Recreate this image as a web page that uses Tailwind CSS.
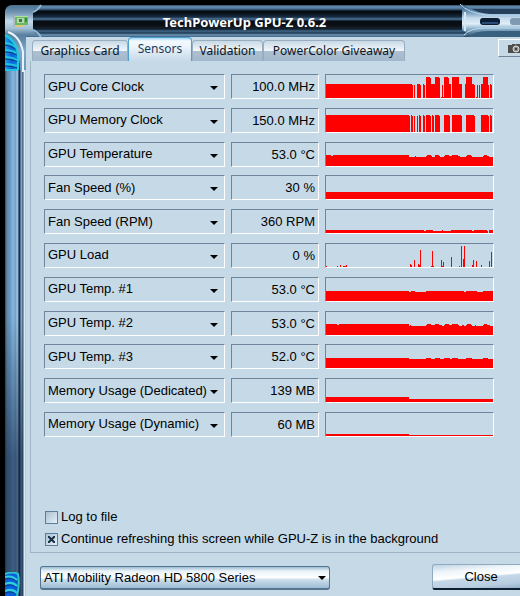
<!DOCTYPE html>
<html lang="en">

<head>
    <meta charset="UTF-8">
    <meta name="viewport" content="width=device-width, initial-scale=1.0">
    <title>TechPowerUp GPU-Z 0.6.2</title>
    <script src="https://cdn.jsdelivr.net/npm/@tailwindcss/browser@4"></script>
</head>

<body class="bg-black overflow-x-hidden font-['Liberation_Sans',Arial,sans-serif] text-[13px] leading-4 text-black">
    <div class="relative flex flex-col min-h-screen pl-[5px] pt-[5px] overflow-hidden">

        <!-- Title bar -->
        <header class="relative flex items-center justify-center h-8 pr-9 rounded-tl-lg bg-[linear-gradient(180deg,#1d3044_0px,#5f86a8_1px,#5b83a8_3px,#2a4660_5px,#05090e_6px,#0b151f_9px,#1a2f44_12px,#4d7396_14px,#30506e_15px,#080d12_16px,#0a1016_21px,#18232d_23px,#0d1a28_24px,#426888_26px,#203a55_28px,#6f98ba_30px,#3a5c7a_32px)]">
            <h1 class="font-['Noto_Sans','Open_Sans',sans-serif] font-bold text-[13px] leading-4 text-white mt-0.5">TechPowerUp GPU-Z 0.6.2</h1>
            <svg class="absolute right-0 top-[-1px]" width="60" height="33" viewBox="0 0 60 33" aria-hidden="true">
                <defs>
                    <linearGradient id="steel" x1="0" y1="0" x2="0" y2="1">
                        <stop offset="0" stop-color="#2b4a66" />
                        <stop offset=".25" stop-color="#6f98ba" />
                        <stop offset=".42" stop-color="#c3daeb" />
                        <stop offset=".6" stop-color="#e0eef8" />
                        <stop offset=".75" stop-color="#8fb2cd" />
                        <stop offset="1" stop-color="#2b4a66" />
                    </linearGradient>
                </defs>
                <path d="M2 0l4 3q6 3 14 3h40v27H3l5-3-6-4z" fill="url(#steel)" />
                <path d="M12 5h48v5H30q-12-1-18-5z" fill="#24405a" />
                <path d="M8 33q6-6 20-6h32v6z" fill="#3a6080" />
                <path d="M0 0q8 9 26 11h34M4 31q6-7 22-7h34" fill="none" stroke="#b9daf0" />
                <path d="M5 8v19" stroke="#d4e8f6" stroke-width="2" />
                <rect x="20" y="14" width="20" height="7" rx="3" fill="#0b1d35" />
                <path d="M22 19h16" stroke="#294d78" stroke-width="2" />
                <rect x="50" y="14" width="14" height="7" rx="3" fill="#7f9ab2" />
            </svg>
        </header>

        <!-- Left corner of the skin with the app icon -->
        <svg class="absolute left-1 top-1 z-10" width="42" height="70" viewBox="0 0 42 70" aria-hidden="true">
            <defs>
                <linearGradient id="corner" x1="0" y1="0" x2="0" y2="1">
                    <stop offset="0" stop-color="#4a708f" />
                    <stop offset=".12" stop-color="#7398b6" />
                    <stop offset=".25" stop-color="#c4dae9" />
                    <stop offset=".36" stop-color="#a3bfd5" />
                    <stop offset=".46" stop-color="#58809f" />
                    <stop offset=".7" stop-color="#7ea6c8" />
                    <stop offset="1" stop-color="#6d97ba" />
                </linearGradient>
                <linearGradient id="glow" x1="0" y1="0" x2="1" y2="0">
                    <stop offset="0" stop-color="#1ca6e8" />
                    <stop offset=".5" stop-color="#0a5ce0" />
                    <stop offset="1" stop-color="#0d8fdc" />
                </linearGradient>
            </defs>
            <path d="M1 32V9q0-8 8-8h26l-6 6v20l6 5H22v34h-6Q16 44 1 34z" fill="url(#corner)" />
            <path d="M29 8q5-2 8-7M29 26q5 2 8 7" fill="none" stroke="#8fb8d6" stroke-width="2" />
            <path d="M4 28q12 4 15 20v20" fill="none" stroke="#e8f4fc" stroke-width="2" />
            <path d="M1 31q11 5 13 20v15H1z" fill="url(#glow)" />
            <path d="M1 41q6 1 11 4M1 48q7 0 12 3M1 55q7 0 13 3M1 62q7 0 13 2" fill="none" stroke="#0a3a72" stroke-width="1" />
            <path d="M1 39q6 0 10 4M1 46q7 0 11 3M1 53q7 0 12 3M1 60q7 0 12 2M1 66h12" fill="none" stroke="#1fc4dc" stroke-width="2" />
            <path d="M1 31q12 6 13 21v14" fill="none" stroke="#22c8dd" stroke-width="2" />
            <path d="M10 10v13" stroke="#a8a9a1" />
            <path d="M11 12h13v9H11z" fill="#6cb862" />
            <path d="M11 12h13v1H11z" fill="#b1e09c" />
            <path d="M12 21h8v2h-8z" fill="#d9c878" />
            <rect x="13" y="14" width="7" height="5" fill="#b4d8b4" />
            <rect x="15" y="15" width="3" height="3" fill="#47704c" />
            <rect x="21" y="14" width="2" height="4" fill="#2e8a44" />
        </svg>

        <div class="flex flex-1">
            <!-- Left edge -->
            <div class="relative w-[21px] shrink-0 bg-[linear-gradient(90deg,#2a4a64_0px,#5f8aab_2px,#6b98bd_5px,#86b6e0_8px,#6f9dc6_11px,#b4d4ea_12px,#7ba5c8_13px,#14283e_14px,#1a3450_15px,#8fb6d6_16px,#6d96ba_17px,#34506c_18px,#d5e8f5_19px,#e2f0f9_20px,#8aa6be_21px)]">
                <div class="absolute inset-0 right-[3px] bg-[linear-gradient(180deg,#14284800_50%,#142848a0_75%,#142848a0_100%)]"></div>
                <svg class="absolute left-0 bottom-0" width="16" height="24" viewBox="0 0 16 24" aria-hidden="true">
                    <path d="M0 2q8-4 13 0 2 10-1 22H0z" fill="#0a5fe0" />
                    <path d="M0 7q7-2 12 3M0 14q7-3 12 2M0 21q7-3 12 2" fill="none" stroke="#0a3a72" />
                    <path d="M0 5q7-2 12 3M0 12q7-3 12 2M0 19q7-3 12 2" fill="none" stroke="#30d0d8" stroke-width="2" />
                    <path d="M0 2q8-3 13 0 2 10-1 22" fill="none" stroke="#2cc5c8" stroke-width="2" />
                </svg>
            </div>

            <main class="flex flex-col flex-1 min-w-0 bg-[#c5d9e7]">
                <!-- Tabs -->
                <div class="flex justify-between h-6">
                    <nav role="tablist" class="flex items-end pl-1.5 font-['Noto_Sans','Open_Sans',sans-serif] text-[12px] leading-5 text-[#0c1626] whitespace-nowrap">
                        <button role="tab" class="w-24 h-[21px] rounded-t border border-b-0 border-[#98aec0] bg-[linear-gradient(180deg,#c9d9e6_0%,#d9e5ee_20%,#f2f6fa_48%,#adc0d0_52%,#a3b8cc_100%)]">Graphics Card</button>
                        <button role="tab" aria-selected="true" class="w-16 h-6 pb-0.5 rounded-t border border-b-0 border-[#4f9fce] text-[#1f3c5c] bg-[linear-gradient(180deg,#9fd4f0_0px,#f4fafe_3px,#eaf4fb_40%,#c5d9e7_100%)]">Sensors</button>
                        <button role="tab" class="w-[71px] h-[21px] rounded-t border border-b-0 border-[#98aec0] bg-[linear-gradient(180deg,#c9d9e6_0%,#d9e5ee_20%,#f2f6fa_48%,#adc0d0_52%,#a3b8cc_100%)]">Validation</button>
                        <button role="tab" class="w-[142px] h-[21px] rounded-t border border-b-0 border-[#98aec0] bg-[linear-gradient(180deg,#c9d9e6_0%,#d9e5ee_20%,#f2f6fa_48%,#adc0d0_52%,#a3b8cc_100%)]">PowerColor Giveaway</button>
                    </nav>
                    <button aria-label="Screenshot" class="flex items-center justify-center w-9 h-[18px] mt-0.5 -mr-3.5 border border-t-white border-l-white border-b-[#6e859c] border-r-[#6e859c]">
                        <svg width="16" height="11" viewBox="0 0 16 11" aria-hidden="true">
                            <path d="M0 2h4V1h3v1l1-1h4l1 1h3v8H0z" fill="#4d4d4b" />
                            <circle cx="8" cy="6" r="3" fill="#8e9290" stroke="#d9dddc" />
                            <circle cx="8" cy="6" r="1" fill="#2a2a2a" />
                        </svg>
                    </button>
                </div>

                <!-- Sensors panel -->
                <section class="flex flex-col flex-1 ml-1 pl-[13px] pt-[13px] pb-[5px] border-l border-b border-[#9fb4c6]">
                    <div id="sensors" class="flex flex-col justify-between h-[363px]"></div>

                    <div class="flex flex-col gap-[6px] mt-auto">
                        <label class="flex items-center gap-[3px]">
                            <input type="checkbox" class="appearance-none size-[13px] ml-px border border-[#5d7d98] bg-linear-to-br from-[#a9c0d2] to-[#e6f0f7]">
                            Log to file
                        </label>
                        <label class="relative flex items-center gap-[3px]">
                            <input type="checkbox" checked class="appearance-none size-[13px] ml-px border border-[#5d7d98] bg-linear-to-br from-[#a9c0d2] to-[#e6f0f7]">
                            <svg class="absolute left-1 pointer-events-none" width="7" height="7" viewBox="0 0 7 7" aria-hidden="true">
                                <path d="M0 0l7 7M7 0L0 7" stroke="#152c42" stroke-width="2" />
                            </svg>
                            Continue refreshing this screen while GPU-Z is in the background
                        </label>
                    </div>
                </section>

                <!-- Card picker and close -->
                <footer class="flex items-end justify-between pl-3.5 pt-[11px] pb-1.5">
                    <div class="relative w-[290px]">
                        <select aria-label="Graphics card" class="appearance-none block w-full h-6 pl-[3px] pt-px rounded-[3px] border border-b-2 border-[#54748f] bg-[linear-gradient(180deg,#9dbcd4_0px,#e9f2f8_4px,#ffffff_50%,#cddfec_60%,#9dbbd2_100%)]">
                            <option>ATI Mobility Radeon HD 5800 Series</option>
                        </select>
                        <svg class="absolute right-1 top-2.5 pointer-events-none" width="8" height="4" viewBox="0 0 8 4" aria-hidden="true">
                            <path d="M0 0h8L4 4z" fill="#000" />
                        </svg>
                    </div>
                    <button class="w-[98px] h-[26px] -mr-2.5 rounded-[3px] border border-[#8fa9be] border-b-2 border-b-[#0d1f30] bg-[linear-gradient(175deg,#bfd3e3_0%,#eef5fa_25%,#ffffff_48%,#c6d8e8_54%,#b7cde0_80%,#8eacc6_100%)]">Close</button>
                </footer>
            </main>
        </div>
    </div>

    <script>
        // history: list of [end x, height] steps, graph is 167 x 23
        const sensors = [
            {
                name: 'GPU Core Clock', value: '100.0 MHz',
                history: [[86, 14], [87, 13], [88, 0], [89, 13], [91, 0], [94, 14], [95, 13], [97, 0], [98, 14], [99, 13], [100, 0], [104, 21], [105, 20], [109, 14], [113, 21], [114, 20], [115, 0], [116, 1], [117, 13], [118, 1], [122, 21], [123, 20], [125, 14], [126, 0], [133, 21], [136, 14], [139, 0], [140, 14], [146, 21], [148, 14], [149, 13], [150, 0], [151, 1], [152, 13], [153, 0], [154, 13], [155, 0], [157, 14], [162, 21], [163, 13], [164, 0], [165, 14], [166, 13]]
            },
            {
                name: 'GPU Memory Clock', value: '150.0 MHz',
                history: [[83, 17], [84, 16], [85, 0], [86, 17], [87, 16], [88, 0], [89, 16], [91, 0], [92, 16], [93, 0], [94, 17], [95, 16], [97, 0], [98, 17], [99, 16], [100, 0], [104, 17], [105, 16], [106, 0], [107, 17], [108, 16], [109, 0], [113, 17], [114, 16], [118, 0], [123, 17], [124, 16], [126, 0], [135, 17], [136, 16], [140, 0], [148, 17], [149, 16], [155, 0], [162, 17], [163, 16], [164, 0], [165, 17], [166, 16]]
            },
            {
                name: 'GPU Temperature', value: '53.0 °C',
                history: [[5, 11], [7, 10], [83, 11], [89, 9], [90, 10], [100, 9], [101, 10], [105, 11], [106, 10], [109, 9], [113, 11], [114, 10], [118, 9], [119, 10], [123, 11], [126, 10], [132, 11], [134, 10], [140, 9], [141, 10], [145, 11], [146, 10], [157, 9], [158, 10], [161, 11], [163, 10], [167, 9]]
            },
            { name: 'Fan Speed (%)', value: '30 %', history: [[167, 7]] },
            {
                name: 'Fan Speed (RPM)', value: '360 RPM',
                history: [[98, 3], [100, 2], [107, 3], [116, 2], [117, 3], [125, 2], [146, 3], [148, 2], [161, 3], [162, 2], [163, 0], [167, 3]]
            },
            {
                name: 'GPU Load', value: '0 %',
                history: [[1, 1], [11, 0], [12, 1], [14, 0], [15, 2], [17, 0], [20, 1], [21, 2], [84, 0], [85, 3], [86, 2], [88, 0], [89, 7], [92, 0], [93, 3], [94, 2], [95, 17], [105, 0], [106, 1], [107, 16], [108, 1], [115, 0], [116, 7], [117, 1], [118, 5], [125, 0], [126, 10], [133, 0], [134, 1], [135, 0], [136, 21], [137, 0], [138, 8], [139, 21], [146, 0], [147, 2], [148, 7], [150, 0], [151, 6], [155, 0], [156, 2], [163, 0], [164, 6], [165, 0], [166, 15]]
            },
            {
                name: 'GPU Temp. #1', value: '53.0 °C',
                history: [[83, 10], [85, 9], [89, 10], [100, 9], [138, 10], [140, 9], [151, 10], [157, 9], [167, 10]]
            },
            {
                name: 'GPU Temp. #2', value: '53.0 °C',
                history: [[11, 11], [13, 10], [83, 11], [84, 9], [85, 10], [100, 9], [101, 10], [105, 11], [109, 10], [113, 11], [116, 10], [118, 9], [119, 10], [123, 11], [126, 10], [132, 11], [133, 10], [136, 9], [138, 10], [140, 9], [141, 10], [145, 11], [146, 10], [149, 9], [150, 10], [157, 9], [158, 10], [161, 11], [164, 10], [167, 9]]
            },
            {
                name: 'GPU Temp. #3', value: '52.0 °C',
                history: [[83, 10], [100, 9], [105, 10], [109, 9], [114, 10], [118, 9], [124, 10], [126, 9], [132, 10], [140, 9], [146, 10], [157, 9], [162, 10], [167, 9]]
            },
            { name: 'Memory Usage (Dedicated)', value: '139 MB', history: [[83, 5], [167, 3]] },
            { name: 'Memory Usage (Dynamic)', value: '60 MB', history: [[83, 2], [167, 1]] }
        ];

        function graphPath(history) {
            let d = 'M0 23';
            history.forEach(([end, height]) => {
                d += `V${23 - height}H${end}`;
            });
            return d + 'V23z';
        }

        document.getElementById('sensors').innerHTML = sensors.map(sensor => `
            <div class="flex gap-1.5 h-[25px]">
                <div class="relative w-[181px] border border-t-[#6e859c] border-l-[#6e859c] border-b-white border-r-white">
                    <select aria-label="${sensor.name}" class="appearance-none block w-full h-full pl-[3px]">
                        <option>${sensor.name}</option>
                    </select>
                    <svg class="absolute right-1.5 top-[11px] pointer-events-none" width="8" height="4" viewBox="0 0 8 4" aria-hidden="true">
                        <path d="M0 0h8L4 4z" fill="#000" />
                    </svg>
                </div>
                <div class="w-[88px] pr-[3px] text-right leading-[23px] border border-t-[#6e859c] border-l-[#6e859c] border-b-white border-r-white">${sensor.value}</div>
                <div class="w-[169px] border border-t-[#6e859c] border-l-[#6e859c] border-b-white border-r-white">
                    <svg class="block" width="167" height="23" viewBox="0 0 167 23" shape-rendering="crispEdges" aria-hidden="true">
                        <path d="${graphPath(sensor.history)}" fill="#f00" />
                    </svg>
                </div>
            </div>`).join('');
    </script>
</body>

</html>
